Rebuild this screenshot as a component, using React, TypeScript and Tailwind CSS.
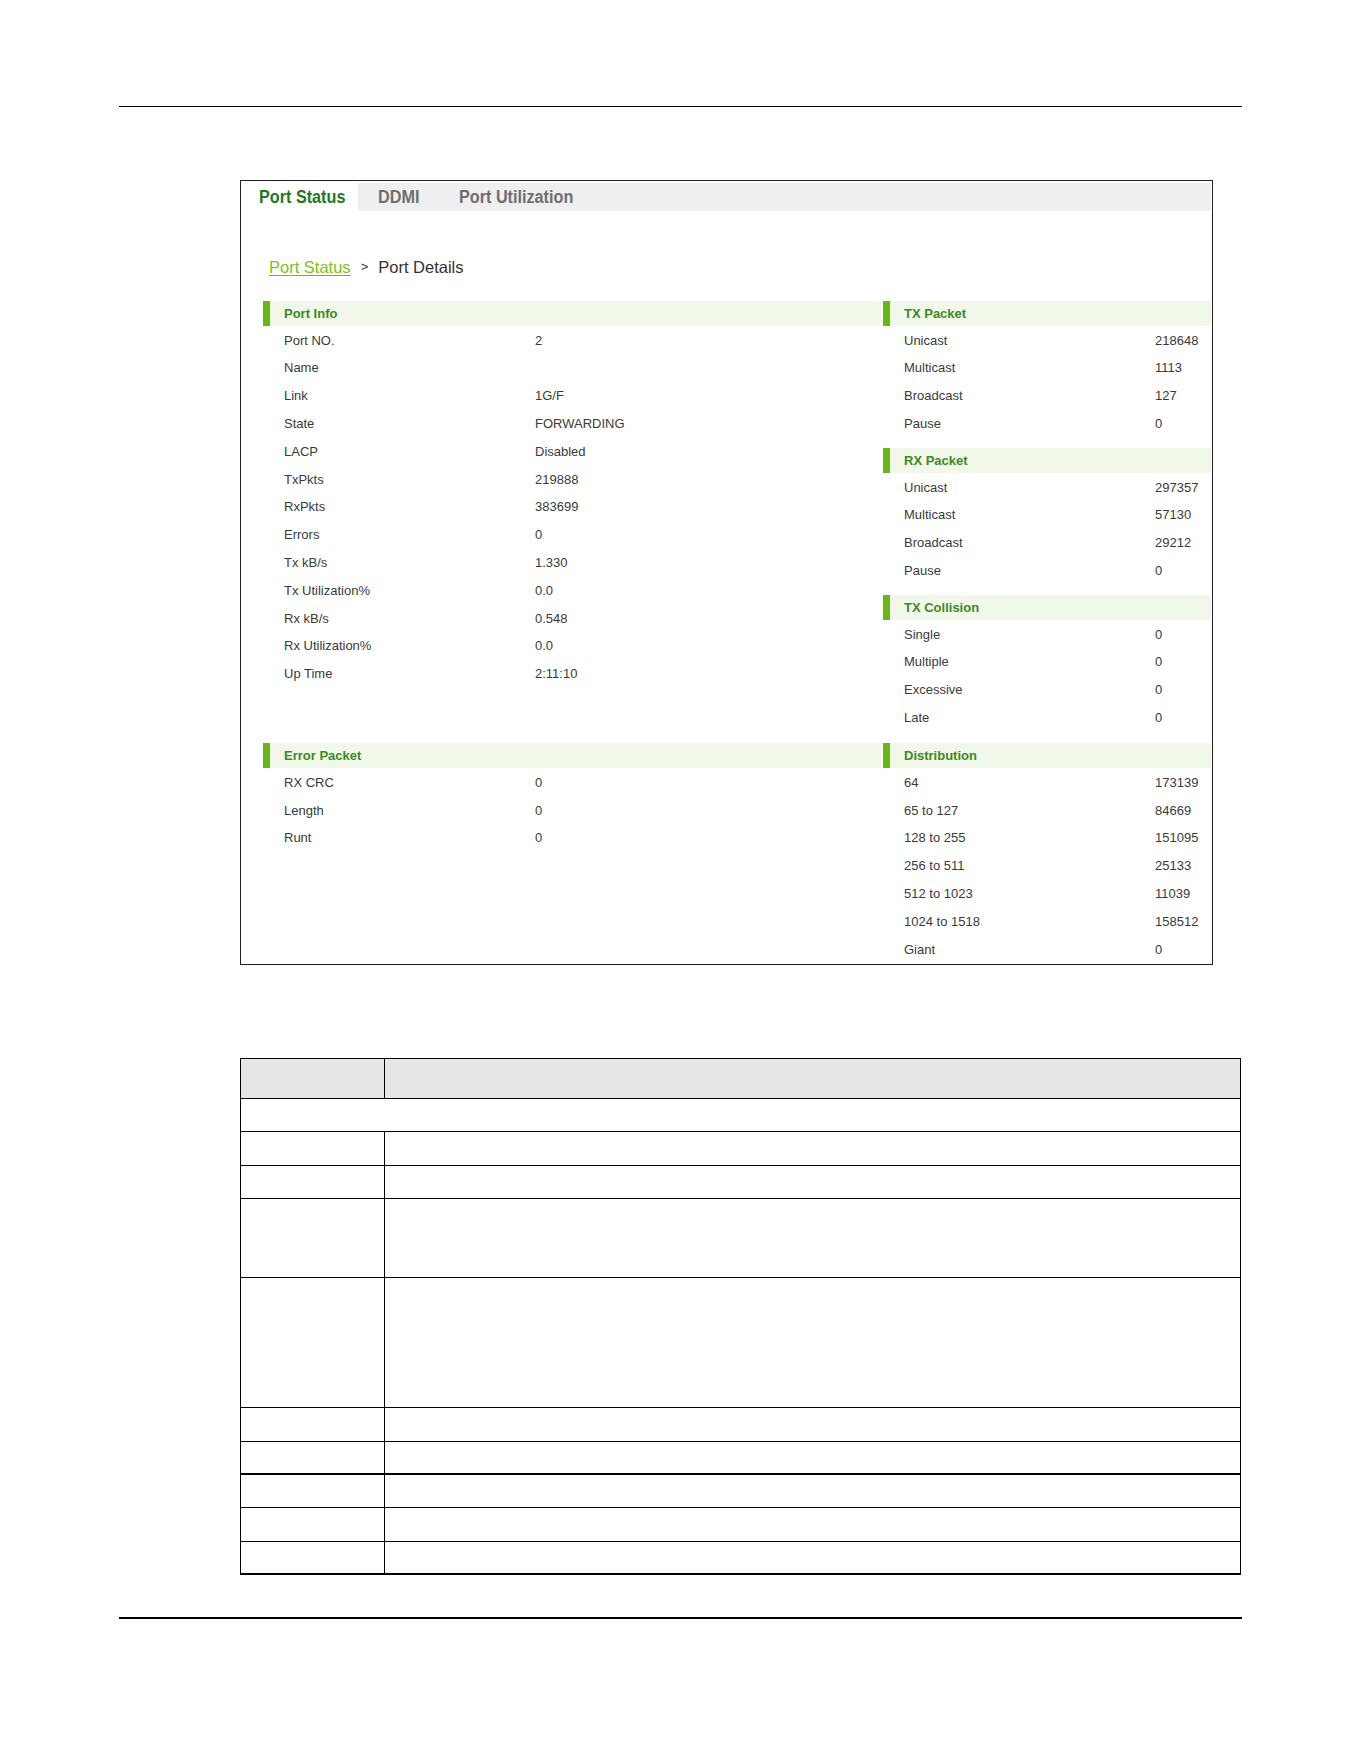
type Row = [string, string];

type Section = { title: string; rows: Row[] };

const portInfo: Section = {
  title: "Port Info",
  rows: [
    ["Port NO.", "2"],
    ["Name", ""],
    ["Link", "1G/F"],
    ["State", "FORWARDING"],
    ["LACP", "Disabled"],
    ["TxPkts", "219888"],
    ["RxPkts", "383699"],
    ["Errors", "0"],
    ["Tx kB/s", "1.330"],
    ["Tx Utilization%", "0.0"],
    ["Rx kB/s", "0.548"],
    ["Rx Utilization%", "0.0"],
    ["Up Time", "2:11:10"],
  ],
};

const packetSections: Section[] = [
  {
    title: "TX Packet",
    rows: [
      ["Unicast", "218648"],
      ["Multicast", "1113"],
      ["Broadcast", "127"],
      ["Pause", "0"],
    ],
  },
  {
    title: "RX Packet",
    rows: [
      ["Unicast", "297357"],
      ["Multicast", "57130"],
      ["Broadcast", "29212"],
      ["Pause", "0"],
    ],
  },
  {
    title: "TX Collision",
    rows: [
      ["Single", "0"],
      ["Multiple", "0"],
      ["Excessive", "0"],
      ["Late", "0"],
    ],
  },
];

const errorPacket: Section = {
  title: "Error Packet",
  rows: [
    ["RX CRC", "0"],
    ["Length", "0"],
    ["Runt", "0"],
  ],
};

const distribution: Section = {
  title: "Distribution",
  rows: [
    ["64", "173139"],
    ["65 to 127", "84669"],
    ["128 to 255", "151095"],
    ["256 to 511", "25133"],
    ["512 to 1023", "11039"],
    ["1024 to 1518", "158512"],
    ["Giant", "0"],
  ],
};

// heights of the field table rows below the screenshot
const tableRows = [33, 34, 33, 79, 130, 34, 33, 33, 34, 33];

function InfoSection({ section }: { section: Section }) {
  return (
    <div>
      <div className="flex h-[25px] items-center bg-[#f1f8e9]">
        <div className="h-full w-[7px] bg-[#66b814]" />
        <span className="pl-[14px] text-[13px] font-bold text-[#3b8a1f]">{section.title}</span>
      </div>
      {section.rows.map(([label, value]) => (
        <div key={label} className="flex h-[27.8px] items-center pl-[21px] pt-[1px] text-[13px] text-[#3a3a3a]">
          <span className="w-[251px] shrink-0">{label}</span>
          <span>{value}</span>
        </div>
      ))}
    </div>
  );
}

function Tab({ label, active }: { label: string; active?: boolean }) {
  return (
    <span className={`inline-block origin-left scale-x-[0.9] ${active ? "text-[#1f7a1f]" : "text-[#6e6e6e]"}`}>
      {label}
    </span>
  );
}

export default function App() {
  return (
    <div className="min-h-[1761px] w-[1361px] bg-white pt-[106px] font-['Liberation_Sans',Arial,sans-serif]">
      <div className="mx-[119px] border-t border-black">
        {/* port details window */}
        <div className="ml-[121px] mt-[73px] w-[973px] border border-[#222] pb-[1px] pl-[4px] pr-[1px] pt-[2px]">
          <div className="flex h-[28px] items-stretch bg-[#efefef] text-[18px] font-bold">
            <div className="flex w-[113px] items-center bg-white pl-[14px]">
              <Tab label="Port Status" active />
            </div>
            <div className="flex w-[85px] items-center pl-[20px]">
              <Tab label="DDMI" />
            </div>
            <div className="flex items-center pl-[16px]">
              <Tab label="Port Utilization" />
            </div>
          </div>

          <div className="mt-[46px] flex h-[20px] items-center pl-[24px] text-[16.5px]">
            <span className="text-[#7cc21e] underline decoration-[#6bbd0c] underline-offset-2">Port Status</span>
            <span className="px-[10px] text-[13px] text-[#333]">&gt;</span>
            <span className="text-[#333]">Port Details</span>
          </div>

          <div className="mt-[24px] grid grid-cols-[618px_328px] gap-x-[2px] gap-y-[12px] pl-[18px]">
            <InfoSection section={portInfo} />
            <div className="flex flex-col gap-[10.8px]">
              {packetSections.map((s) => (
                <InfoSection key={s.title} section={s} />
              ))}
            </div>
            <InfoSection section={errorPacket} />
            <InfoSection section={distribution} />
          </div>
        </div>

        {/* field description table */}
        <table className="ml-[121px] mt-[93px] w-[1001px] border-collapse">
          <tbody>
            <tr className="h-[40px] bg-[#e6e6e6]">
              <td className="w-[144px] border border-black" />
              <td className="border border-black" />
            </tr>
            <tr className="h-[33px]">
              <td colSpan={2} className="border border-black" />
            </tr>
            {tableRows.slice(1).map((h, i) => (
              <tr key={i} style={{ height: h }}>
                <td
                  className={`border border-black ${i === 6 ? "border-t-2" : ""} ${
                    i === tableRows.length - 2 ? "border-b-2" : ""
                  }`}
                />
                <td
                  className={`border border-black ${i === 6 ? "border-t-2" : ""} ${
                    i === tableRows.length - 2 ? "border-b-2" : ""
                  }`}
                />
              </tr>
            ))}
          </tbody>
        </table>

        <div className="mt-[42px] border-t-2 border-black" />
      </div>
    </div>
  );
}
